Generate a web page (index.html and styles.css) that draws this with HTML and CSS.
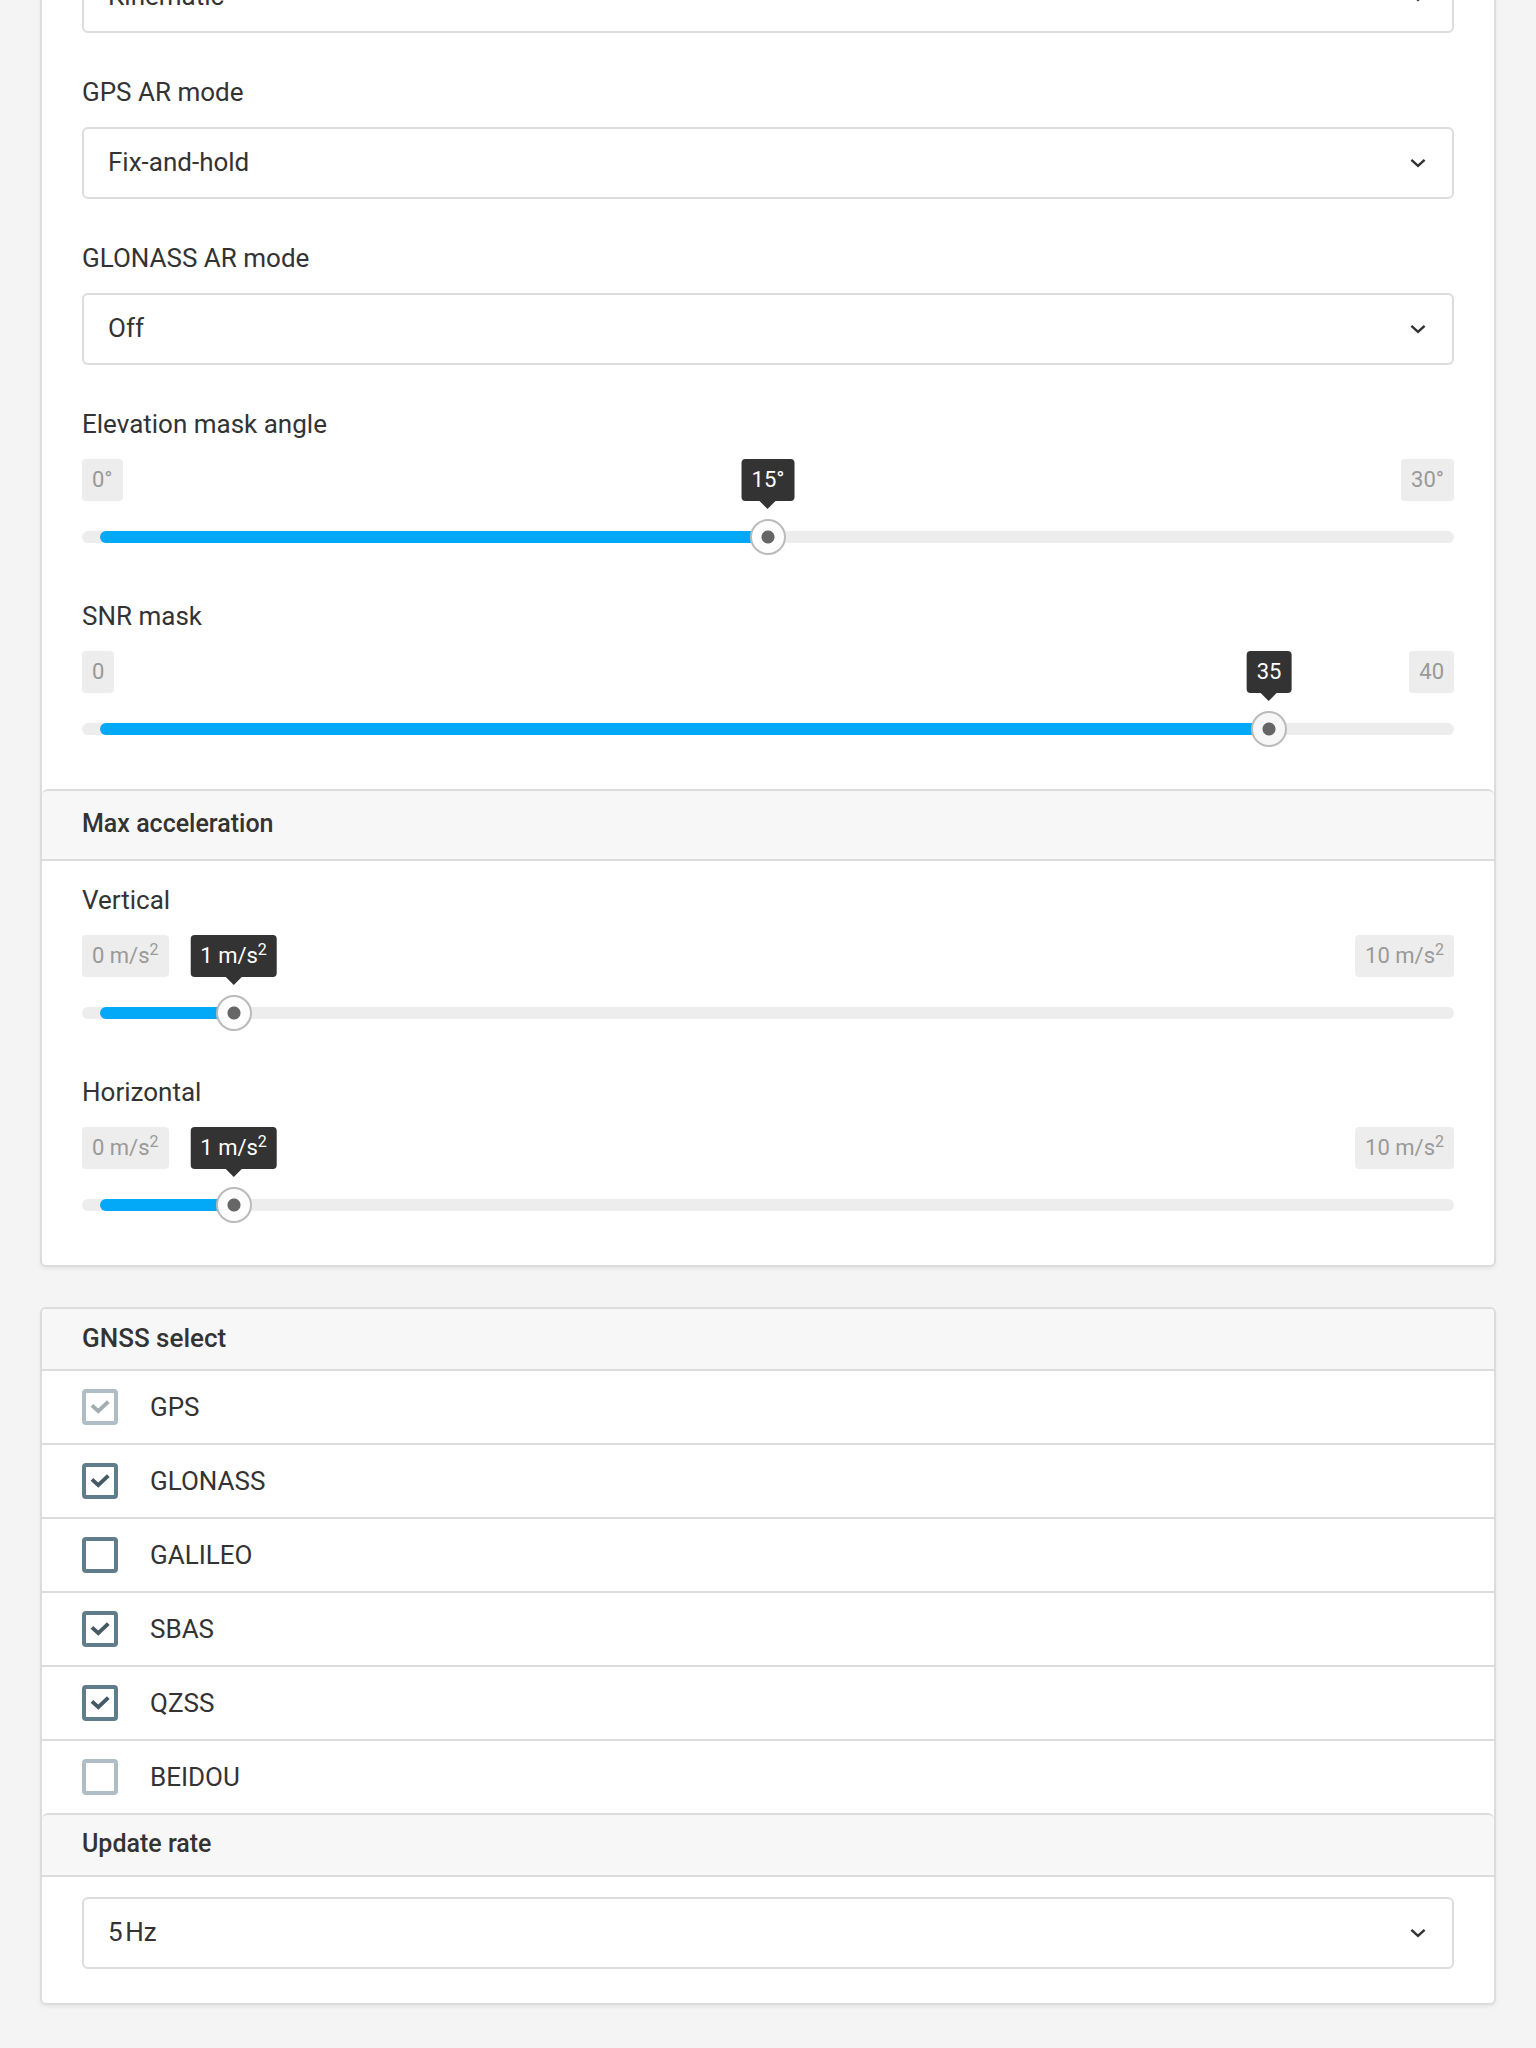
FILE: index.html
```html
<!DOCTYPE html>
<html lang="en">
<head>
  <meta charset="utf-8">
  <meta name="viewport" content="width=device-width, initial-scale=1">
  <title>RTK settings</title>
  <link rel="stylesheet" href="styles.css">
</head>
<body>
  <svg class="sprite" aria-hidden="true">
    <symbol id="chevron" viewBox="0 0 24 24"><path d="M5.400 8.800 12 14.800l6.600-6" fill="none" stroke="currentColor" stroke-width="2.500"/></symbol>
    <symbol id="check" viewBox="0 0 36 36"><path d="M9.900 16.400 16.300 22.200 26.300 12.600" fill="none" stroke="currentColor" stroke-width="3.900"/></symbol>
  </svg>
  <main class="page">
    <section class="card card--continued">
      <div class="fields">
        <div class="select">
          <select class="select__input" aria-label="Positioning mode"><option>Kinematic</option></select>
          <svg class="select__icon" aria-hidden="true"><use href="#chevron"/></svg>
        </div>
        <div class="field">
          <label class="field__label" for="gps-ar">GPS AR mode</label>
          <div class="select">
            <select class="select__input" id="gps-ar"><option>Fix-and-hold</option></select>
            <svg class="select__icon" aria-hidden="true"><use href="#chevron"/></svg>
          </div>
        </div>
        <div class="field">
          <label class="field__label" for="glonass-ar">GLONASS AR mode</label>
          <div class="select">
            <select class="select__input" id="glonass-ar"><option>Off</option></select>
            <svg class="select__icon" aria-hidden="true"><use href="#chevron"/></svg>
          </div>
        </div>
        <div class="field">
          <label class="field__label" for="elevation">Elevation mask angle</label>
          <div class="slider" style="--value: 0.5">
            <div class="slider__scale"><span class="chip">0°</span><output class="chip chip--value" for="elevation">15°</output><span class="chip">30°</span></div>
            <div class="slider__control">
              <div class="slider__track"><div class="slider__fill"></div></div>
              <input class="slider__input" id="elevation" type="range" min="0" max="30" value="15">
            </div>
          </div>
        </div>
        <div class="field">
          <label class="field__label" for="snr">SNR mask</label>
          <div class="slider" style="--value: 0.875">
            <div class="slider__scale"><span class="chip">0</span><output class="chip chip--value" for="snr">35</output><span class="chip">40</span></div>
            <div class="slider__control">
              <div class="slider__track"><div class="slider__fill"></div></div>
              <input class="slider__input slider__input--active" id="snr" type="range" min="0" max="40" value="35">
            </div>
          </div>
        </div>
      </div>
      <h2 class="heading heading--divided heading--tall">Max acceleration</h2>
      <div class="fields fields--padded">
        <div class="field">
          <label class="field__label" for="vertical">Vertical</label>
          <div class="slider" style="--value: 0.1">
            <div class="slider__scale"><span class="chip">0 m/s<sup>2</sup></span><output class="chip chip--value" for="vertical">1 m/s<sup>2</sup></output><span class="chip">10 m/s<sup>2</sup></span></div>
            <div class="slider__control">
              <div class="slider__track"><div class="slider__fill"></div></div>
              <input class="slider__input" id="vertical" type="range" min="0" max="10" value="1">
            </div>
          </div>
        </div>
        <div class="field">
          <label class="field__label" for="horizontal">Horizontal</label>
          <div class="slider" style="--value: 0.1">
            <div class="slider__scale"><span class="chip">0 m/s<sup>2</sup></span><output class="chip chip--value" for="horizontal">1 m/s<sup>2</sup></output><span class="chip">10 m/s<sup>2</sup></span></div>
            <div class="slider__control">
              <div class="slider__track"><div class="slider__fill"></div></div>
              <input class="slider__input" id="horizontal" type="range" min="0" max="10" value="1">
            </div>
          </div>
        </div>
      </div>
    </section>

    <section class="card">
      <h2 class="heading">GNSS select</h2>
      <ul class="options">
        <li class="options__item"><label class="option"><span class="checkbox"><input class="checkbox__input" type="checkbox" checked disabled><svg class="checkbox__mark" aria-hidden="true"><use href="#check"/></svg></span>GPS</label></li>
        <li class="options__item"><label class="option"><span class="checkbox"><input class="checkbox__input" type="checkbox" checked><svg class="checkbox__mark" aria-hidden="true"><use href="#check"/></svg></span>GLONASS</label></li>
        <li class="options__item"><label class="option"><span class="checkbox"><input class="checkbox__input" type="checkbox"><svg class="checkbox__mark" aria-hidden="true"><use href="#check"/></svg></span>GALILEO</label></li>
        <li class="options__item"><label class="option"><span class="checkbox"><input class="checkbox__input" type="checkbox" checked><svg class="checkbox__mark" aria-hidden="true"><use href="#check"/></svg></span>SBAS</label></li>
        <li class="options__item"><label class="option"><span class="checkbox"><input class="checkbox__input" type="checkbox" checked><svg class="checkbox__mark" aria-hidden="true"><use href="#check"/></svg></span>QZSS</label></li>
        <li class="options__item"><label class="option"><span class="checkbox"><input class="checkbox__input" type="checkbox" disabled><svg class="checkbox__mark" aria-hidden="true"><use href="#check"/></svg></span>BEIDOU</label></li>
      </ul>
      <h2 class="heading heading--divided" id="update-rate">Update rate</h2>
      <div class="fields fields--compact">
        <div class="select">
          <select class="select__input" aria-labelledby="update-rate"><option>5&#8202;Hz</option></select>
          <svg class="select__icon" aria-hidden="true"><use href="#chevron"/></svg>
        </div>
      </div>
    </section>
  </main>
</body>
</html>
```
FILE: styles.css
```css
:root {
  --text: #333;
  --line: #dcdcdc;
  --track: #ededed;
  --accent: #03a9f7;
  --thumb: 36px;
}

* {
  box-sizing: border-box;
}

body {
  margin: 0;
  background: #f4f4f4;
  color: var(--text);
  font-family: Roboto, "Liberation Sans", sans-serif;
  font-size: 26px;
  line-height: 30px;
}

.sprite {
  display: none;
}

.page {
  display: flex;
  flex-direction: column;
  gap: 40px;
  /* The view is scrolled part-way into the first card. */
  margin-top: -39px;
  padding: 0 40px 43px;
}

.card {
  background: #fff;
  border: 2px solid var(--line);
  border-radius: 6px;
  box-shadow: 0 2px 4px rgba(0, 0, 0, 0.06);
}

.card--continued {
  border-top: 0;
  border-radius: 0 0 6px 6px;
}

.heading {
  margin: 0;
  padding: 14px 40px 16px;
  background: #f7f7f7;
  border-bottom: 2px solid var(--line);
  border-radius: 6px 6px 0 0;
  font-size: 26px;
  font-weight: 500;
}

/* Headings part-way down a card are set slightly smaller than the card's first. */
.heading--divided {
  border-top: 2px solid var(--line);
  font-size: 25px;
}

.heading--tall {
  padding: 18px 40px 20px;
}

.fields {
  display: flex;
  flex-direction: column;
  gap: 44px;
  padding: 0 40px 40px;
}

.fields--padded {
  padding-top: 24px;
}

.fields--compact {
  padding: 20px 40px 34px;
}

.field {
  display: flex;
  flex-direction: column;
  gap: 20px;
}

.select {
  display: grid;
  align-items: center;
}

.select__input,
.select__icon {
  grid-area: 1 / 1;
}

.select__input {
  appearance: none;
  width: 100%;
  height: 72px;
  margin: 0;
  padding: 0 64px 2px 24px;
  background: #fff;
  border: 2px solid var(--line);
  border-radius: 6px;
  color: inherit;
  font: inherit;
}

.select__icon {
  justify-self: end;
  width: 24px;
  height: 24px;
  margin-right: 24px;
  pointer-events: none;
}

.slider {
  display: flex;
  flex-direction: column;
  gap: 18px;
  padding-bottom: 2px;
}

.slider__scale {
  position: relative;
  display: flex;
  justify-content: space-between;
}

.chip {
  padding: 0 10px;
  background: var(--track);
  border-radius: 4px;
  color: #999;
  font-size: 22px;
  line-height: 42px;
  white-space: nowrap;
}

.chip sup {
  font-size: 16px;
  line-height: 0;
  vertical-align: 8px;
}

.chip--value {
  position: absolute;
  left: calc(var(--thumb) / 2 + (100% - var(--thumb)) * var(--value));
  transform: translateX(-50%);
  background: var(--text);
  color: #fff;
}

.chip--value::after {
  content: "";
  position: absolute;
  top: 100%;
  left: 50%;
  margin-left: -8px;
  border: 8px solid transparent;
  border-top-color: var(--text);
  border-bottom: 0;
}

.slider__control {
  display: grid;
  align-items: center;
}

.slider__track,
.slider__input {
  grid-area: 1 / 1;
}

.slider__track {
  height: 12px;
  padding: 0 calc(var(--thumb) / 2);
  background: var(--track);
  border-radius: 6px;
}

.slider__fill {
  width: calc(100% * var(--value));
  height: 12px;
  background: var(--accent);
  border-radius: 6px 0 0 6px;
}

.slider__input {
  --thumb-fill: #fdfdfd;
  appearance: none;
  width: 100%;
  height: var(--thumb);
  margin: 0;
  background: transparent;
}

.slider__input--active {
  --thumb-fill: #f7f7f7;
}

.slider__input::-webkit-slider-thumb {
  appearance: none;
  width: var(--thumb);
  height: var(--thumb);
  background: radial-gradient(circle, #666 5px, #666 6px, var(--thumb-fill) 7px);
  border: 2px solid #bbb;
  border-radius: 50%;
}

.options {
  margin: 0;
  padding: 0;
  list-style: none;
}

.options__item + .options__item {
  border-top: 2px solid var(--line);
}

.option {
  display: flex;
  align-items: center;
  gap: 32px;
  height: 72px;
  padding: 0 40px;
}

.checkbox {
  display: grid;
}

.checkbox__input,
.checkbox__mark {
  grid-area: 1 / 1;
  width: 36px;
  height: 36px;
}

.checkbox__input {
  appearance: none;
  margin: 0;
  background: #fff;
  border: 4px solid #607d8b;
  border-radius: 4px;
}

.checkbox__mark {
  visibility: hidden;
  color: #455a64;
  pointer-events: none;
}

.checkbox__input:checked + .checkbox__mark {
  visibility: visible;
}

.checkbox__input:disabled {
  border-color: #afbec5;
}

.checkbox__input:disabled + .checkbox__mark {
  color: #a2adb2;
}
```
